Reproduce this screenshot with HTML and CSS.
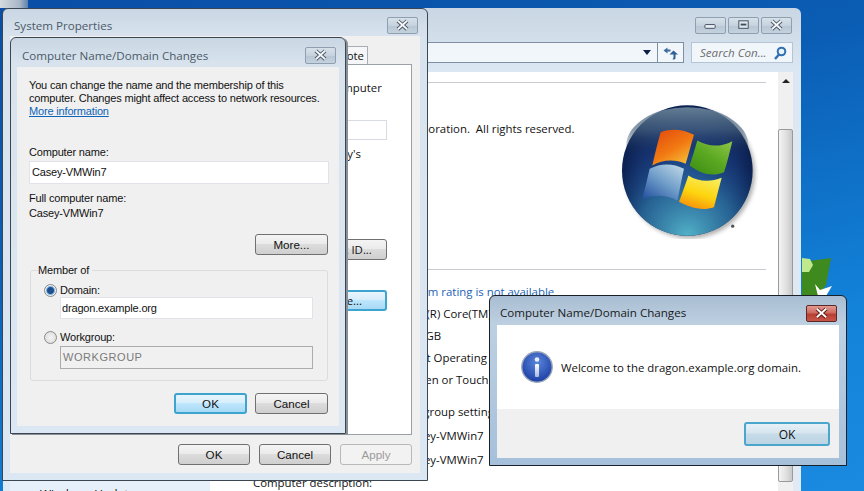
FILE: index.html
```html
<!DOCTYPE html>
<html lang="en">
<head>
<meta charset="utf-8">
<title>Computer Name/Domain Changes</title>
<link rel="stylesheet" href="styles.css">
</head>
<body>
<div class="desktop">
  <div class="desk-icon"></div>
  <svg class="gadget" viewBox="0 0 32 38" width="32" height="38">
    <path d="M0 4 L29 0 L24 27 L16 38 L0 38 Z" fill="#3f8a1e"/>
    <path d="M0 0 L8 1 L11 7 L7 14 L0 14 Z" fill="#bfe98c"/>
    <path d="M13 26 L18 32 L30 28 L24 38 L16 38 Z" fill="#fff"/>
  </svg>

  <section class="win explorer">
    <div class="caption-row">
      <span class="cap-btn"><svg viewBox="0 0 30 16" width="29" height="15"><rect x="9" y="7" width="11" height="4" rx="1" fill="#e8eef4" stroke="#3f4c5c"/></svg></span>
      <span class="cap-btn"><svg viewBox="0 0 30 16" width="29" height="15"><rect x="10" y="3" width="10" height="8" fill="#dfe7ef" stroke="#3f4c5c"/><rect x="12" y="6" width="6" height="2" fill="#3f4c5c"/></svg></span>
      <span class="cap-btn"><svg viewBox="0 0 30 16" width="29" height="15"><path d="M10 3 L20 12 M20 3 L10 12" stroke="#4a5666" stroke-width="4"/><path d="M10 3 L20 12 M20 3 L10 12" stroke="#f4f6f8" stroke-width="2"/></svg></span>
    </div>
    <div class="nav-row">
      <div class="address">
        <span class="addr-arrow"></span>
        <span class="addr-refresh"><svg viewBox="0 0 16 14" width="16" height="14"><path d="M0.5 4.5 L4.5 1.5 V3.5 H7.5 V5.5 H4.5 V7.5 Z" fill="#3d6a9c"/><path d="M10.5 4.5 L15 8.5 H12.5 V12 C12.5 13 11.5 13.5 9.5 13.5 C10.2 12.8 10.5 12 10.5 11 V8.5 H6.5 Z" fill="#2f5f94"/></svg></span>
      </div>
      <div class="search">
        <span class="search-text">Search Con...</span>
        <svg viewBox="0 0 14 14" width="14" height="14"><circle cx="8.5" cy="5.5" r="3.8" fill="#e8f2fa" stroke="#2f6fb0" stroke-width="2"/><path d="M6 8.5 L2 13" stroke="#2f6fb0" stroke-width="2.4"/></svg>
      </div>
    </div>
    <div class="main">
      <aside class="side"><div class="side-link">Windows Update</div></aside>
      <div class="content">
        <div class="rule rule-a"></div>
        <p class="copy">© 2009 Microsoft Corporation.  All rights reserved.</p>
        <div class="rule rule-b"></div>
        <p class="val link-val">System rating is not available</p>
        <p class="val val-cpu">Intel(R) Core(TM) i5</p>
        <p class="val">4.00 GB</p>
        <p class="val">64-bit Operating System</p>
        <p class="val">No Pen or Touch Input</p>
        <p class="heading">workgroup settings</p>
        <p class="val val-name">Casey-VMWin7</p>
        <p class="val val-name">Casey-VMWin7</p>
        <p class="label">Computer description:</p>
      </div>
      <div class="scroll">
        <span class="scroll-up"></span>
        <div class="thumb"></div>
      </div>
    </div>
  </section>

  <svg class="logo" viewBox="560 305 420 410" width="140" height="137">
    <defs>
      <radialGradient id="orbBase" cx="50%" cy="50%" r="50%">
        <stop offset="0" stop-color="#1f4488"/>
        <stop offset="0.75" stop-color="#142f6a"/>
        <stop offset="1" stop-color="#0b2150"/>
      </radialGradient>
      <linearGradient id="orbTop" x1="0" y1="0" x2="0" y2="1">
        <stop offset="0" stop-color="#6f889c" stop-opacity="0.9"/>
        <stop offset="0.3" stop-color="#4a6580" stop-opacity="0.65"/>
        <stop offset="0.62" stop-color="#12294f" stop-opacity="0"/>
      </linearGradient>
      <radialGradient id="orbLow" cx="50%" cy="100%" r="70%">
        <stop offset="0" stop-color="#52b2c9"/>
        <stop offset="0.55" stop-color="#2c6f9f" stop-opacity="0.8"/>
        <stop offset="1" stop-color="#1a4686" stop-opacity="0"/>
      </radialGradient>
      <linearGradient id="paneO" x1="0.1" y1="0" x2="0.8" y2="1">
        <stop offset="0" stop-color="#e24a0e"/>
        <stop offset="0.55" stop-color="#f27a12"/>
        <stop offset="1" stop-color="#f5c13a"/>
      </linearGradient>
      <linearGradient id="paneG" x1="0.9" y1="0" x2="0.1" y2="1">
        <stop offset="0" stop-color="#8cc444"/>
        <stop offset="0.5" stop-color="#5aa821"/>
        <stop offset="1" stop-color="#3f8d14"/>
      </linearGradient>
      <linearGradient id="paneB" x1="0.9" y1="0" x2="0.1" y2="1">
        <stop offset="0" stop-color="#bcd6e6"/>
        <stop offset="0.5" stop-color="#6e9cc8"/>
        <stop offset="1" stop-color="#25509f"/>
      </linearGradient>
      <linearGradient id="paneY" x1="0.7" y1="0" x2="0.3" y2="1">
        <stop offset="0" stop-color="#f7ee62"/>
        <stop offset="0.55" stop-color="#fdd50f"/>
        <stop offset="1" stop-color="#f7900a"/>
      </linearGradient>
      <filter id="soft"><feGaussianBlur stdDeviation="7"/></filter>
    </defs>
    <circle cx="773" cy="518" r="195" fill="#6a6a6a" opacity="0.55" filter="url(#soft)"/>
    <circle cx="765" cy="510" r="196" fill="url(#orbBase)"/>
    <circle cx="765" cy="510" r="196" fill="url(#orbLow)"/>
    <ellipse cx="765" cy="435" rx="183" ry="115" fill="url(#orbTop)"/>
    <path d="M685 395 C720 382 755 388 785 403 C775 435 768 465 760 490 C725 475 690 478 660 495 C668 460 676 425 685 395 Z" fill="url(#paneO)"/>
    <path d="M795 420 C830 440 865 440 900 422 C892 455 885 485 875 515 C840 530 805 520 772 495 C780 470 788 445 795 420 Z" fill="url(#paneG)"/>
    <path d="M652 505 C685 488 722 488 755 505 C748 535 742 570 735 600 C700 582 665 582 630 596 C638 565 645 535 652 505 Z" fill="url(#paneB)"/>
    <path d="M768 525 C800 545 835 545 868 532 C860 562 852 592 845 620 C810 632 772 622 740 604 C750 578 760 550 768 525 Z" fill="url(#paneY)"/>
    <circle cx="901" cy="677" r="5" fill="#555"/>
  </svg>

  <section class="win sysprops">
    <header class="titlebar inactive"><span>System Properties</span><span class="x-btn"><svg viewBox="0 0 30 16" width="29" height="15"><path d="M10 3 L20 12 M20 3 L10 12" stroke="#4a5666" stroke-width="4"/><path d="M10 3 L20 12 M20 3 L10 12" stroke="#f4f6f8" stroke-width="2"/></svg></span></header>
    <div class="sp-body">
      <div class="tabs"><span class="tab">Remote</span></div>
      <div class="panel">
        <p class="panel-line">computer</p>
        <div class="panel-input"></div>
        <p class="panel-line panel-gap">Directory's</p>
        <button class="btn panel-btn panel-btn-id">Network ID...</button>
        <button class="btn btn-default panel-btn panel-btn-ch">Change...</button>
      </div>
      <div class="actions sp-actions">
        <button class="btn">OK</button>
        <button class="btn">Cancel</button>
        <button class="btn btn-off">Apply</button>
      </div>
    </div>
  </section>

  <section class="win namedlg">
    <header class="titlebar inactive"><span>Computer Name/Domain Changes</span><span class="x-btn"><svg viewBox="0 0 30 16" width="29" height="15"><path d="M10 3 L20 12 M20 3 L10 12" stroke="#4a5666" stroke-width="4"/><path d="M10 3 L20 12 M20 3 L10 12" stroke="#f4f6f8" stroke-width="2"/></svg></span></header>
    <div class="nd-body">
      <p class="nd-intro">You can change the name and the membership of this<br>computer. Changes might affect access to network resources.<br><a class="nd-link">More information</a></p>
      <label class="nd-label">Computer name:</label>
      <div class="field nd-name">Casey-VMWin7</div>
      <p class="nd-label nd-full">Full computer name:</p>
      <p class="nd-label nd-full-val">Casey-VMWin7</p>
      <div class="nd-more"><button class="btn">More...</button></div>
      <fieldset class="group">
        <legend>Member of</legend>
        <div class="radio-row"><span class="radio radio-on"></span>Domain:</div>
        <div class="field group-field group-field-a">dragon.example.org</div>
        <div class="radio-row radio-row-2"><span class="radio"></span>Workgroup:</div>
        <div class="field group-field field-off">WORKGROUP</div>
      </fieldset>
      <div class="actions nd-actions">
        <button class="btn btn-default">OK</button>
        <button class="btn">Cancel</button>
      </div>
    </div>
  </section>

  <section class="win msgbox">
    <header class="titlebar active"><span>Computer Name/Domain Changes</span><span class="x-btn x-red"><svg viewBox="0 0 30 16" width="29" height="15"><path d="M10 3 L20 12 M20 3 L10 12" stroke="#5a1a14" stroke-width="4"/><path d="M10 3 L20 12 M20 3 L10 12" stroke="#fff" stroke-width="2"/></svg></span></header>
    <div class="msg-white">
      <svg viewBox="0 0 32 32" width="32" height="32">
        <defs>
          <radialGradient id="infoB" cx="50%" cy="35%" r="65%"><stop offset="0" stop-color="#5a86dc"/><stop offset="1" stop-color="#1b3ea3"/></radialGradient>
          <linearGradient id="infoI" x1="0" y1="0" x2="0" y2="1"><stop offset="0" stop-color="#fff"/><stop offset="1" stop-color="#a8b8dc"/></linearGradient>
        </defs>
        <circle cx="16" cy="16" r="15.2" fill="url(#infoB)" stroke="#9aa6b8" stroke-width="1.4"/>
        <circle cx="16" cy="8.5" r="2.3" fill="#e8eefa"/>
        <rect x="14" y="13" width="4" height="13" rx="1" fill="url(#infoI)"/>
      </svg>
      <p class="msg-text">Welcome to the dragon.example.org domain.</p>
    </div>
    <div class="msg-foot"><button class="btn btn-msg">OK</button></div>
  </section>
</div>
</body>
</html>
```
FILE: styles.css
```css
html, body { margin: 0; padding: 0; }
body { width: 864px; height: 491px; overflow: hidden; }
p { margin: 0; }
.desktop {
  position: relative; width: 864px; height: 491px; overflow: hidden;
  background: linear-gradient(165deg, #0a4ea6 0%, #0b5db4 35%, #1383da 75%, #1a8ae0 100%);
  font-family: "Open Sans", sans-serif; font-size: 11.4px; color: #111;
}
.desk-icon { position: absolute; left: 0; top: 0; width: 28px; height: 8px; background: linear-gradient(90deg, #d5dbe0, #a8b6c6 70%, #5f80b0); }
.gadget { position: absolute; left: 802px; top: 258px; }
.win { position: absolute; box-sizing: border-box; }

/* explorer */
.explorer {
  left: 3px; top: 8px; width: 798px; height: 560px; padding: 0 8px 0 7px;
  background: linear-gradient(180deg, #c9d6e3 0, #d5e1ec 40px, #dbe7f2 64px, #e0ebf5 100%);
  border-radius: 6px 6px 0 0; display: flex; flex-direction: column;
}
.caption-row { height: 34px; box-sizing: border-box; padding: 9px 1px 0 0; display: flex; justify-content: flex-end; gap: 2px; }
.cap-btn, .x-btn {
  box-sizing: border-box; width: 31px; height: 17px; border: 1px solid #8f9fb0; border-radius: 2px;
  background: linear-gradient(180deg, #d7e1ea 0, #c6d2de 50%, #b8c6d4 51%, #c4d2de 100%);
  display: flex; align-items: center; justify-content: center;
}
.nav-row { height: 21px; display: flex; justify-content: flex-end; gap: 7px; }
.address {
  flex: 1; margin-left: 400px; box-sizing: border-box; border: 1px solid #7f8fa2; background: #f1f6fb;
  display: flex; justify-content: flex-end; align-items: stretch; max-width: 267px;
}
.addr-arrow { align-self: center; margin-right: 6px; border: 4px solid transparent; border-top: 5px solid #0d1f4a; border-bottom: 0; }
.addr-refresh { width: 25px; border-left: 1px solid #7f8fa2; display: flex; align-items: center; justify-content: center; }
.search {
  width: 102px; box-sizing: border-box; border: 1px solid #b5c4d4; background: #f1f6fb; padding: 0 5px 0 8px;
  display: flex; align-items: center; justify-content: space-between;
}
.search-text { font-style: italic; color: #6d6d6d; font-size: 11.6px; }
.main { flex: 1; margin-top: 9px; display: flex; min-height: 0; }
.side { width: 200px; background: #e5f0fa; }
.side-link { padding: 414px 0 0 30px; font-size: 12px; color: #111; }
.content { flex: 1; background: #fff; padding-left: 20px; }
.rule { height: 1px; background: #c8ccd0; margin-right: 12px; }
.rule-a { margin-top: 10px; }
.copy { margin: 39px 0 0 78px; height: 14px; line-height: 14px; white-space: pre; }
.rule-b { margin-top: 133px; }
.val { padding-left: 170px; height: 14px; line-height: 14px; margin-top: 8px; white-space: nowrap; }
.val-cpu { padding-left: 173px; }
.link-val { color: #1a62b8; margin-top: 15px; }
.heading { padding-left: 167px; height: 14px; line-height: 14px; margin-top: 18px; white-space: nowrap; }
.val.val-name { margin-top: 10px; padding-left: 175px; }
.label { padding-left: 23px; height: 14px; line-height: 14px; margin-top: 9px; }
.scroll { position: relative; width: 15px; background: #f0f0f0; }
.scroll-up { display: block; width: 0; margin: 7px auto 0; border: 4px solid transparent; border-bottom: 4px solid #222; border-top: 0; }
.thumb { box-sizing: border-box; margin-top: 46px; height: 353px; border: 1px solid #9a9a9a; border-radius: 2px; background: linear-gradient(90deg, #f4f4f4, #e2e2e2 50%, #c9c9c9); }

/* logo */
.logo { position: absolute; left: 618.7px; top: 101.7px; }

/* title bars */
.titlebar { display: flex; justify-content: space-between; align-items: center; font-size: 11.6px; }
.inactive { color: #4c5a68; }
.active { color: #1a1a1a; }
.x-red { border-color: #5a2a28; background: linear-gradient(180deg, #e29a90 0, #cf6b60 45%, #b73f32 55%, #c9554a 100%); }

/* system properties */
.sysprops {
  left: 2px; top: 8px; width: 426px; height: 473px; border: 1px solid #3c4650; border-radius: 6px 6px 0 0;
  background: linear-gradient(180deg, #c9d6e3 0, #d8e3ee 28px, #dbe7f2 100%);
  padding: 0 7px 7px; display: flex; flex-direction: column;
}
.sysprops .titlebar { height: 27px; padding: 9px 2px 0 4px; box-sizing: border-box; align-items: flex-start; }
.sysprops .x-btn { margin-top: -1px; }
.sp-body { flex: 1; background: #f0f0f0; padding: 0 8px; display: flex; flex-direction: column; }
.tabs { margin-top: 10px; height: 18px; display: flex; justify-content: flex-end; padding-right: 44px; }
.tab { box-sizing: border-box; width: 50px; height: 18px; padding-right: 3px; text-align: right; line-height: 17px; background: #f5f6f7; border: 1px solid #a8aeb4; border-bottom: 0; white-space: nowrap; }
.panel { height: 371px; box-sizing: border-box; background: #fff; border: 1px solid #9aa0a6; padding: 16px 24px 0 0; display: flex; flex-direction: column; align-items: flex-end; }
.panel-line { width: 57px; height: 14px; line-height: 14px; }
.panel-input { width: 70px; height: 20px; margin-top: 25px; border: 1px solid #d8dce0; box-sizing: border-box; }
.panel-line.panel-gap { margin-top: 7px; width: 83px; }
.panel .panel-btn { width: 99px; font-family: "Open Sans", sans-serif; font-size: 11.4px; }
.panel-btn-id { margin-top: 78px; }
.panel-btn-ch { margin-top: 30px; }
.actions { display: flex; gap: 9px; justify-content: flex-end; }
.sp-actions { margin-top: 9px; }
.sp-actions .btn { width: 72px; }

/* buttons */
.btn {
  box-sizing: border-box; width: 73px; height: 21px; padding: 0; border: 1px solid #707070; border-radius: 3px;
  background: linear-gradient(180deg, #f4f4f4 0, #ebebeb 45%, #dcdcdc 50%, #cfcfcf 100%);
  font-family: "Liberation Sans", sans-serif; font-size: 11.6px; color: #111;
}
.btn-default { border: 2px solid #3ca4cf; background: linear-gradient(180deg, #e8f5fc 0, #d6eefb 45%, #bee6fd 50%, #a8d9f4 100%); }
.btn-off { border-color: #b8b8b8; background: #f2f2f2; color: #9a9a9a; }
.btn-msg { width: 86px; height: 24px; border: 2px solid #4aa6cc; background: linear-gradient(180deg, #e6f0f6 0, #d6e5ef 45%, #c6dbe8 50%, #bcd4e4 100%); font-family: "Open Sans", sans-serif; font-size: 12px; }

/* name dialog */
.namedlg {
  left: 10px; top: 37px; width: 336px; height: 397px; border: 1px solid #3c4650; border-radius: 6px 6px 0 0;
  background: linear-gradient(180deg, #c9d6e3 0, #d8e3ee 26px, #dbe7f2 100%);
  padding: 0 6px 7px; display: flex; flex-direction: column; box-shadow: 2px 1px 0 #8a9098;
}
.namedlg .titlebar { height: 29px; padding: 10px 3px 0 5px; box-sizing: border-box; align-items: flex-start; }
.namedlg .x-btn { margin-top: -1px; }
.nd-body { flex: 1; background: #f0f0f0; padding: 12px 10px 0 12px; font-family: "Liberation Sans", sans-serif; font-size: 11px; letter-spacing: -0.17px; line-height: 13px; display: flex; flex-direction: column; }
.nd-link { color: #0c64b8; text-decoration: underline; }
.nd-label { display: block; }
label.nd-label { margin-top: 28px; }
.field { box-sizing: border-box; background: #fff; border: 1px solid #e2e3ea; }
.nd-name { height: 23px; margin-top: 2px; line-height: 21px; padding-left: 2px; }
.nd-full { margin-top: 8px; }
.nd-full-val { margin-top: 2px; }
.nd-more { margin-top: 14px; display: flex; justify-content: flex-end; padding-right: 1px; }
.group { margin: 9px 1px 0 1px; padding: 7px 14px 11px 13px; min-width: 0; border: 1px solid #dcdcdc; border-radius: 3px; }
.group legend { padding: 0 3px 0 0; margin-left: -6px; line-height: 13px; }
.radio-row { display: flex; align-items: center; gap: 3px; height: 13px; }
.radio-row-2 { margin-top: 12px; }
.radio { box-sizing: border-box; width: 13px; height: 13px; border-radius: 50%; border: 1px solid #8a8a8a; background: radial-gradient(circle, #f4f4f4, #d8d8d8); }
.radio-on { background: radial-gradient(circle, #1d4f8e 0 3px, #7fb2dc 4px, #e6eef4 5px); }
.group-field { height: 22px; margin: 2px 0 0 16px; line-height: 20px; padding-left: 1px; }
.group-field-a { margin-top: 0; }
.field-off { height: 23px; background: #f0f0f0; border-color: #acacac; color: #7a7a7a; letter-spacing: 0.55px; padding-left: 2px; }
.nd-actions { margin-top: 12px; gap: 8px; padding-right: 1px; }

/* message box */
.msgbox {
  left: 489px; top: 295px; width: 358px; height: 171px; border: 1px solid #1a2028; border-radius: 6px 6px 0 0;
  background: linear-gradient(180deg, #a9bdd2 0, #bdd0e2 28px, #a5c0da 100%);
  padding: 0 7px 7px; display: flex; flex-direction: column;
}
.msgbox .titlebar { height: 29px; padding: 9px 2px 0 3px; box-sizing: border-box; align-items: flex-start; }
.msg-white { height: 84px; background: #fff; box-sizing: border-box; padding: 0 0 0 24px; display: flex; align-items: center; gap: 8px; }
.msg-text { white-space: nowrap; }
.msg-foot { flex: 1; background: #f0f0f0; padding: 13px 9px 0 0; display: flex; justify-content: flex-end; }
```
